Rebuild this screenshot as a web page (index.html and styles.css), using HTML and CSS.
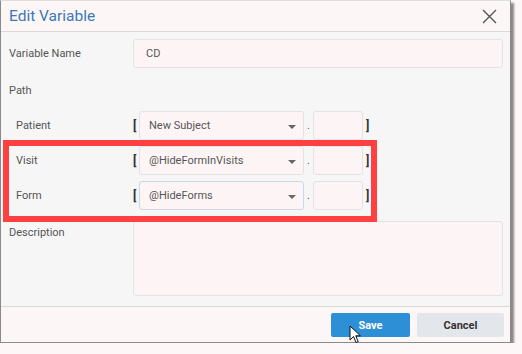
FILE: index.html
```html
<!DOCTYPE html>
<html lang="en">

<head>
    <meta charset="UTF-8">
    <meta name="viewport" content="width=device-width, initial-scale=1.0">
    <title>Edit Variable</title>
    <link rel="stylesheet" href="styles.css">
</head>

<body>
    <div class="dialog">
        <div class="dialog-header">
            <h1>Edit Variable</h1>
            <svg class="close" width="15" height="15" viewBox="0 0 15 15">
                <path d="M1 1 L14 14 M14 1 L1 14" stroke="#555" stroke-width="1.4" fill="none" />
            </svg>
        </div>

        <div class="dialog-body">
            <div class="row name-row">
                <label>Variable Name</label>
                <div class="input">CD</div>
            </div>

            <div class="row path-row">
                <label>Path</label>
            </div>

            <div class="path-list">
                <div class="row path-item">
                    <label>Patient</label>
                    <div class="path-fields">
                        <span class="bracket">[</span>
                        <div class="select">New Subject<span class="caret"></span></div>
                        <span class="dot">.</span>
                        <div class="input small"></div>
                        <span class="bracket close-bracket">]</span>
                    </div>
                </div>
                <div class="row path-item">
                    <label>Visit</label>
                    <div class="path-fields">
                        <span class="bracket">[</span>
                        <div class="select">@HideFormInVisits<span class="caret"></span></div>
                        <span class="dot">.</span>
                        <div class="input small"></div>
                        <span class="bracket close-bracket">]</span>
                    </div>
                </div>
                <div class="row path-item">
                    <label>Form</label>
                    <div class="path-fields">
                        <span class="bracket">[</span>
                        <div class="select focused">@HideForms<span class="caret"></span></div>
                        <span class="dot">.</span>
                        <div class="input small"></div>
                        <span class="bracket close-bracket">]</span>
                    </div>
                </div>
            </div>

            <div class="row desc-row">
                <label>Description</label>
                <div class="input textarea"></div>
            </div>
        </div>

        <div class="dialog-footer">
            <button class="btn btn-save">Save</button>
            <button class="btn btn-cancel">Cancel</button>
        </div>

        <!-- annotation box drawn over the form -->
        <div class="highlight-box"></div>

        <svg class="cursor" width="13" height="20" viewBox="0 0 13 20">
            <path d="M1 1 L1 15 L4.5 11.5 L7 17.5 L9.2 16.6 L6.8 10.8 L11.5 10.8 Z" fill="#fff" stroke="#111" stroke-width="1" stroke-linejoin="round" />
        </svg>
    </div>
</body>

</html>
```

FILE: styles.css
```css
body {
    margin: 0;
    background-color: #fdf7f7;
    font-family: Roboto, "Liberation Sans", sans-serif;
    color: #555;
}

.dialog {
    position: relative;
    width: 509px;
    height: 341px;
    border: 1px solid #8a8a8a;
    border-top-color: #ddd;
    background: #fdf6f6;
    box-shadow: 3px 3px 2px rgba(0, 0, 0, 0.45);
}

.dialog-header {
    height: 30px;
    display: flex;
    align-items: center;
    justify-content: space-between;
    padding: 0 13px 0 8px;
    border-bottom: 1px solid #d9d9d9;
}

h1 {
    margin: 0;
    font-size: 15.5px;
    font-weight: 400;
    color: #3b78b5;
}

.close {
    display: block;
}

.dialog-body {
    background: #f6f6f6;
    padding: 7px 7px 11px 8px;
    height: 256px;
    border-bottom: 1px solid #d9d9d9;
}

.row {
    display: grid;
    grid-template-columns: 124px 1fr;
    align-items: center;
    font-size: 11px;
}

.row label {
    color: #555;
}

.input,
.select {
    box-sizing: border-box;
    background: #fdf5f5;
    border: 1px solid #e4e2e5;
    border-radius: 3px;
    font-size: 11px;
    color: #555;
}

.name-row .input {
    height: 29px;
    line-height: 27px;
    padding-left: 12px;
}

.path-row {
    height: 20px;
    margin-top: 12px;
}

.path-list {
    display: flex;
    flex-direction: column;
    gap: 6px;
    margin-top: 11px;
}

.path-item {
    height: 29px;
}

.path-item label {
    padding-left: 7px;
}

.path-fields {
    display: flex;
    align-items: center;
    height: 29px;
}

.bracket {
    width: 6px;
    font-weight: 700;
    color: #333;
    font-size: 12px;
}

.close-bracket {
    margin-left: 3px;
}

.select {
    position: relative;
    width: 165px;
    height: 29px;
    line-height: 27px;
    padding-left: 9px;
}

.select.focused {
    border-color: #cbd9e4;
}

.caret {
    position: absolute;
    right: 7px;
    top: 13px;
    width: 0;
    height: 0;
    border-left: 4px solid transparent;
    border-right: 4px solid transparent;
    border-top: 4px solid #666;
}

.dot {
    width: 9px;
    text-align: center;
    color: #555;
}

.input.small {
    width: 50px;
    height: 29px;
}

.desc-row {
    align-items: start;
    margin-top: 11px;
}

.desc-row label {
    padding-top: 5px;
}

.textarea {
    height: 75px;
}

.dialog-footer {
    display: flex;
    justify-content: flex-end;
    gap: 7px;
    padding: 6px 6px 0 0;
}

.btn {
    height: 24px;
    border: none;
    border-radius: 2px;
    font-family: Roboto, "Liberation Sans", sans-serif;
    font-size: 11px;
    font-weight: 700;
}

.btn-save {
    width: 79px;
    background: #2d8fd6;
    color: #fff;
}

.btn-cancel {
    width: 87px;
    background: #e3e6eb;
    color: #333;
}

.highlight-box {
    position: absolute;
    left: 2px;
    top: 139px;
    width: 362px;
    height: 70px;
    border: 6px solid #ff4040;
}

.cursor {
    position: absolute;
    left: 348px;
    top: 324px;
}
```
